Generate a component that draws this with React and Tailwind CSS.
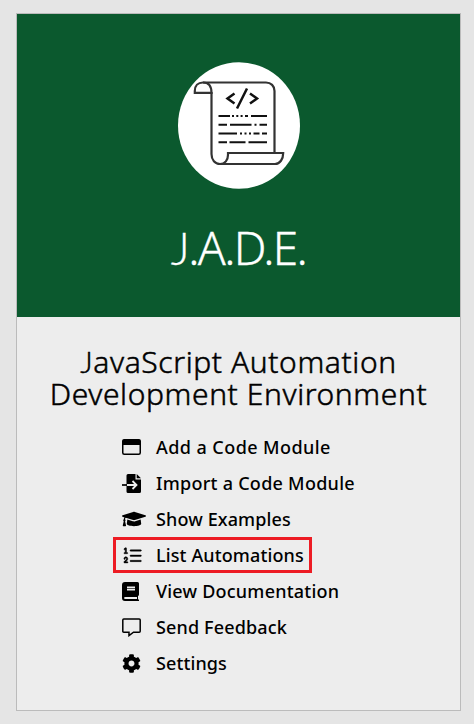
import React from "react";
import { FaGraduationCap, FaCog } from "react-icons/fa";
import { GoListOrdered } from "react-icons/go";

function ScriptIcon() {
  return (
    <svg className="h-[127px] w-[122px]" viewBox="178 62 122 127" fill="none">
      <ellipse cx="239" cy="125.5" rx="61" ry="63.3" fill="#fff" />
      <g stroke="#333" strokeWidth="2.2">
        <path d="M203 82.5H266C271 82.5 274.5 86 274.5 91V152.5" />
        <path d="M194.8 92.8V91C194.8 86 198 82.5 203 82.5C208.5 82.5 211.5 86 211.5 92.8Z" />
        <path d="M211.5 92V154C211.5 160 215 164 220 164H275C280 164 283.2 159 283.2 153H228V155C228 160 225 164 220 164" />
      </g>
      <path stroke="#111" strokeWidth="2.5" d="M234.5 93.5L227.5 98.5L234.5 103.5M247 88.5L237 108.5M250 93.5L257 98.5L250 103.5" />
      <g stroke="#111" strokeWidth="2.1">
        <path d="M218.5 116H230M232 116H234M236.3 116H238.3M240.6 116H242.6M245 116H248M251 116H267" />
        <path d="M218.5 124.8H227M230 124.8H251.5M254.5 124.8H256.5M259.5 124.8H267" />
        <path d="M218.5 133.5H237M240 133.5H242M244.5 133.5H246.5M249 133.5H251M253.5 133.5H259.5M262 133.5H267" />
        <path d="M218.5 142.3H227M229.5 142.3H245.5M248.5 142.3H267" />
      </g>
    </svg>
  );
}

function WindowIcon() {
  return (
    <svg className="h-4 w-[19px]" viewBox="0 0 19 16">
      <rect x="0.75" y="0.75" width="17.5" height="14.5" rx="1.5" fill="none" stroke="#000" strokeWidth="1.5" />
      <path d="M.5 2Q.5 .5 2 .5H17Q18.5 .5 18.5 2V6H.5Z" />
    </svg>
  );
}

function ImportIcon() {
  return (
    <svg className="h-[19px] w-[19px]" viewBox="0 0 19 19">
      <path d="M6 0H13.5V5.5H19V17.5Q19 19 17.5 19H6Q4.5 19 4.5 17.5V1.5Q4.5 0 6 0ZM14.7 0L19 4.3H14.7Z" />
      <path d="M0 11H5" stroke="#000" strokeWidth="1.7" />
      <path d="M5 11H14M10.5 7L14.5 11L10.5 15" fill="none" stroke="#ededed" strokeWidth="1.8" />
    </svg>
  );
}

function BookIcon() {
  return (
    <svg className="h-[19px] w-[17px]" viewBox="0 0 17 19">
      <path d="M3 0H15.5Q17 0 17 1.5V12.5Q17 13.5 16 14V17.5H17V19H3Q0 19 0 16V3Q0 0 3 0Z" />
      <path fill="#ededed" d="M5 4.5H13V8.5H5ZM3.5 15H15V17H3.5Q2 17 2 16T3.5 15Z" />
      <path stroke="#555" d="M5 6.5H13" />
    </svg>
  );
}

function CommentIcon() {
  return (
    <svg className="h-[19px] w-[19px]" viewBox="0 0 19 19" fill="none" stroke="#000" strokeWidth="1.5">
      <path d="M1.8 1H17.2Q18.2 1 18.2 2V13.2Q18.2 14.2 17.2 14.2H11.5L7 17.6V14.2H1.8Q.8 14.2 .8 13.2V2Q.8 1 1.8 1Z" />
    </svg>
  );
}

const items = [
  { label: "Add a Code Module", icon: <WindowIcon />, tracking: "tracking-[0.43px]" },
  { label: "Import a Code Module", icon: <ImportIcon />, tracking: "tracking-[0.27px]" },
  { label: "Show Examples", icon: <FaGraduationCap className="h-6 w-6" />, tracking: "tracking-[0.12px]" },
  { label: "List Automations", icon: <GoListOrdered className="ml-px h-[21px] w-[21px] stroke-black stroke-[0.5]" />, tracking: "tracking-[0.12px]", boxed: true },
  { label: "View Documentation", icon: <BookIcon />, tracking: "tracking-[0.22px]" },
  { label: "Send Feedback", icon: <CommentIcon />, tracking: "tracking-[0.14px]" },
  { label: "Settings", icon: <FaCog className="h-[19px] w-[19px]" />, tracking: "tracking-[0.1px]" },
];

export default function App() {
  return (
    <div className="h-[724px] w-[474px] bg-[#e5e5e5] pt-[13px] pl-4 font-['Noto_Sans','Open_Sans',sans-serif] text-black">
      <main className="h-[698px] w-[445px] border border-[#bbb] bg-[#ededed]">
        <header className="flex h-[303px] flex-col items-center bg-[#0b592e] pt-12">
          <ScriptIcon />
          <h1 className="mt-[34px] text-[46px] leading-[48px] font-light tracking-[-1.6px] whitespace-nowrap text-white [-webkit-text-stroke:0.3px_white]">
            <span className="font-['Lato',sans-serif] leading-none">J</span>.A.D.E.
          </h1>
        </header>
        <h2 className="mt-[29px] text-center text-[30px] leading-8 font-light whitespace-nowrap [-webkit-text-stroke:0.5px_black]">
          <span className="block h-8 tracking-[0.6px]">
            <span className="font-['Lato',sans-serif] leading-none">J</span>avaScript Automation
          </span>
          <span className="block h-8 tracking-[0.6px]">Development Environment</span>
        </h2>
        <ul className="mt-[18px] ml-24 w-[260px] pt-px">
          {items.map((item) => (
            <li key={item.label} className="flex h-9">
              <div className={`flex h-9 items-center border-[3px] pr-[5px] pl-1.5 ${item.boxed ? "border-[#ed1c24]" : "border-transparent"}`}>
                <span className="flex w-[34px] shrink-0 items-center">{item.icon}</span>
                <span className={`text-[18px] leading-6 font-medium whitespace-nowrap ${item.tracking}`}>{item.label}</span>
              </div>
            </li>
          ))}
        </ul>
      </main>
    </div>
  );
}
